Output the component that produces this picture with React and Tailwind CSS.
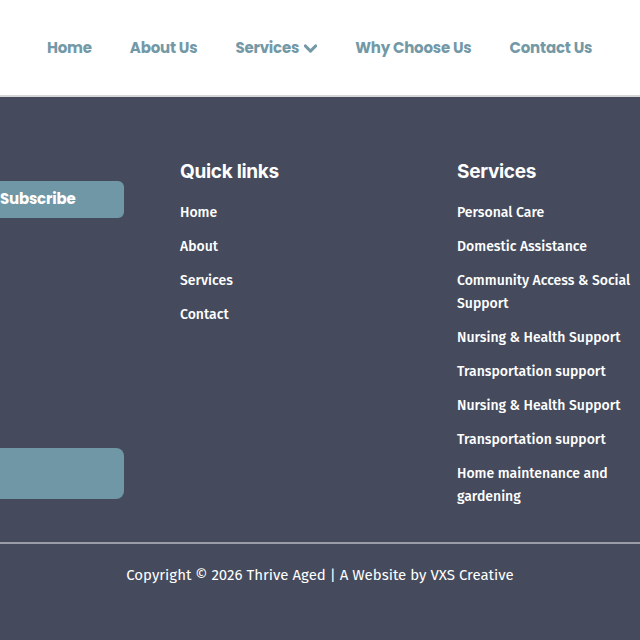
import React from 'react';

const navItems = ['Home', 'About Us', 'Services', 'Why Choose Us', 'Contact Us'];

const quickLinks = ['Home', 'About', 'Services', 'Contact'];

const services = [
  'Personal Care',
  'Domestic Assistance',
  'Community Access & Social Support',
  'Nursing & Health Support',
  'Transportation support',
  'Nursing & Health Support',
  'Transportation support',
  'Home maintenance and gardening',
];

const Chevron = () => (
  <svg viewBox="2 2 20 20" className="w-[13px] h-[13px] ml-[5px]" fill="none" stroke="currentColor" strokeWidth="4.5" strokeLinecap="round" strokeLinejoin="round">
    <path d="M4 8l8 8 8-8" />
  </svg>
);

export default function App() {
  return (
    <div className="w-[640px] h-[640px] overflow-hidden bg-[#454b5d]">
      {/* Header */}
      <header className="h-[97px] bg-white border-b-2 border-[#d6d6d6] flex items-center">
        <nav className="mt-[2px] flex items-center gap-[38px] pl-[47px] font-['Poppins','Inter',sans-serif] text-[15px] font-bold text-[#7399a7] tracking-[-0.2px]">
          {navItems.map(item => (
            <span key={item} className="flex items-center">
              {item}
              {item === 'Services' && <Chevron />}
            </span>
          ))}
        </nav>
      </header>

      {/* Footer */}
      <footer className="text-white">
        <div className="flex pt-[61px] pb-[34px]">
          {/* Newsletter column */}
          <div className="w-[124px] flex flex-col">
            <button className="mt-[23px] h-[37px] -ml-[20px] w-[144px] pl-[20px] text-left rounded-md bg-[#7097a5] font-['Poppins','Inter',sans-serif] font-bold text-[15px] tracking-[-0.2px]">
              Subscribe
            </button>
            <div className="mt-[230px] h-[51px] -ml-[20px] w-[144px] rounded-lg bg-[#7097a5]" />
          </div>

          {/* Quick links */}
          <div className="ml-[56px] w-[277px]">
            <h3 className="font-['Inter',sans-serif] font-bold text-[19px] leading-[28px] tracking-[-0.3px]">Quick links</h3>
            <ul className="mt-[15px] space-y-[11px] font-['Fira_Sans','Ubuntu','Noto_Sans',sans-serif] font-medium text-[14px] leading-[23px]">
              {quickLinks.map(link => (
                <li key={link}>{link}</li>
              ))}
            </ul>
          </div>

          {/* Services */}
          <div className="w-[183px]">
            <h3 className="font-['Inter',sans-serif] font-bold text-[19px] leading-[28px] tracking-[-0.3px]">Services</h3>
            <ul className="mt-[15px] space-y-[11px] font-['Fira_Sans','Ubuntu','Noto_Sans',sans-serif] font-medium text-[14px] leading-[23px] pr-[8px]">
              {services.map((s, i) => (
                <li key={i}>{s}</li>
              ))}
            </ul>
          </div>
        </div>

        <div className="border-t-2 border-[#9a9da8]" />
        <p className="pt-[20px] text-center font-['Fira_Sans','Ubuntu','Noto_Sans',sans-serif] text-[15px] leading-[22px]">
          Copyright © 2026 Thrive Aged | A Website by VXS Creative
        </p>
      </footer>
    </div>
  );
}
